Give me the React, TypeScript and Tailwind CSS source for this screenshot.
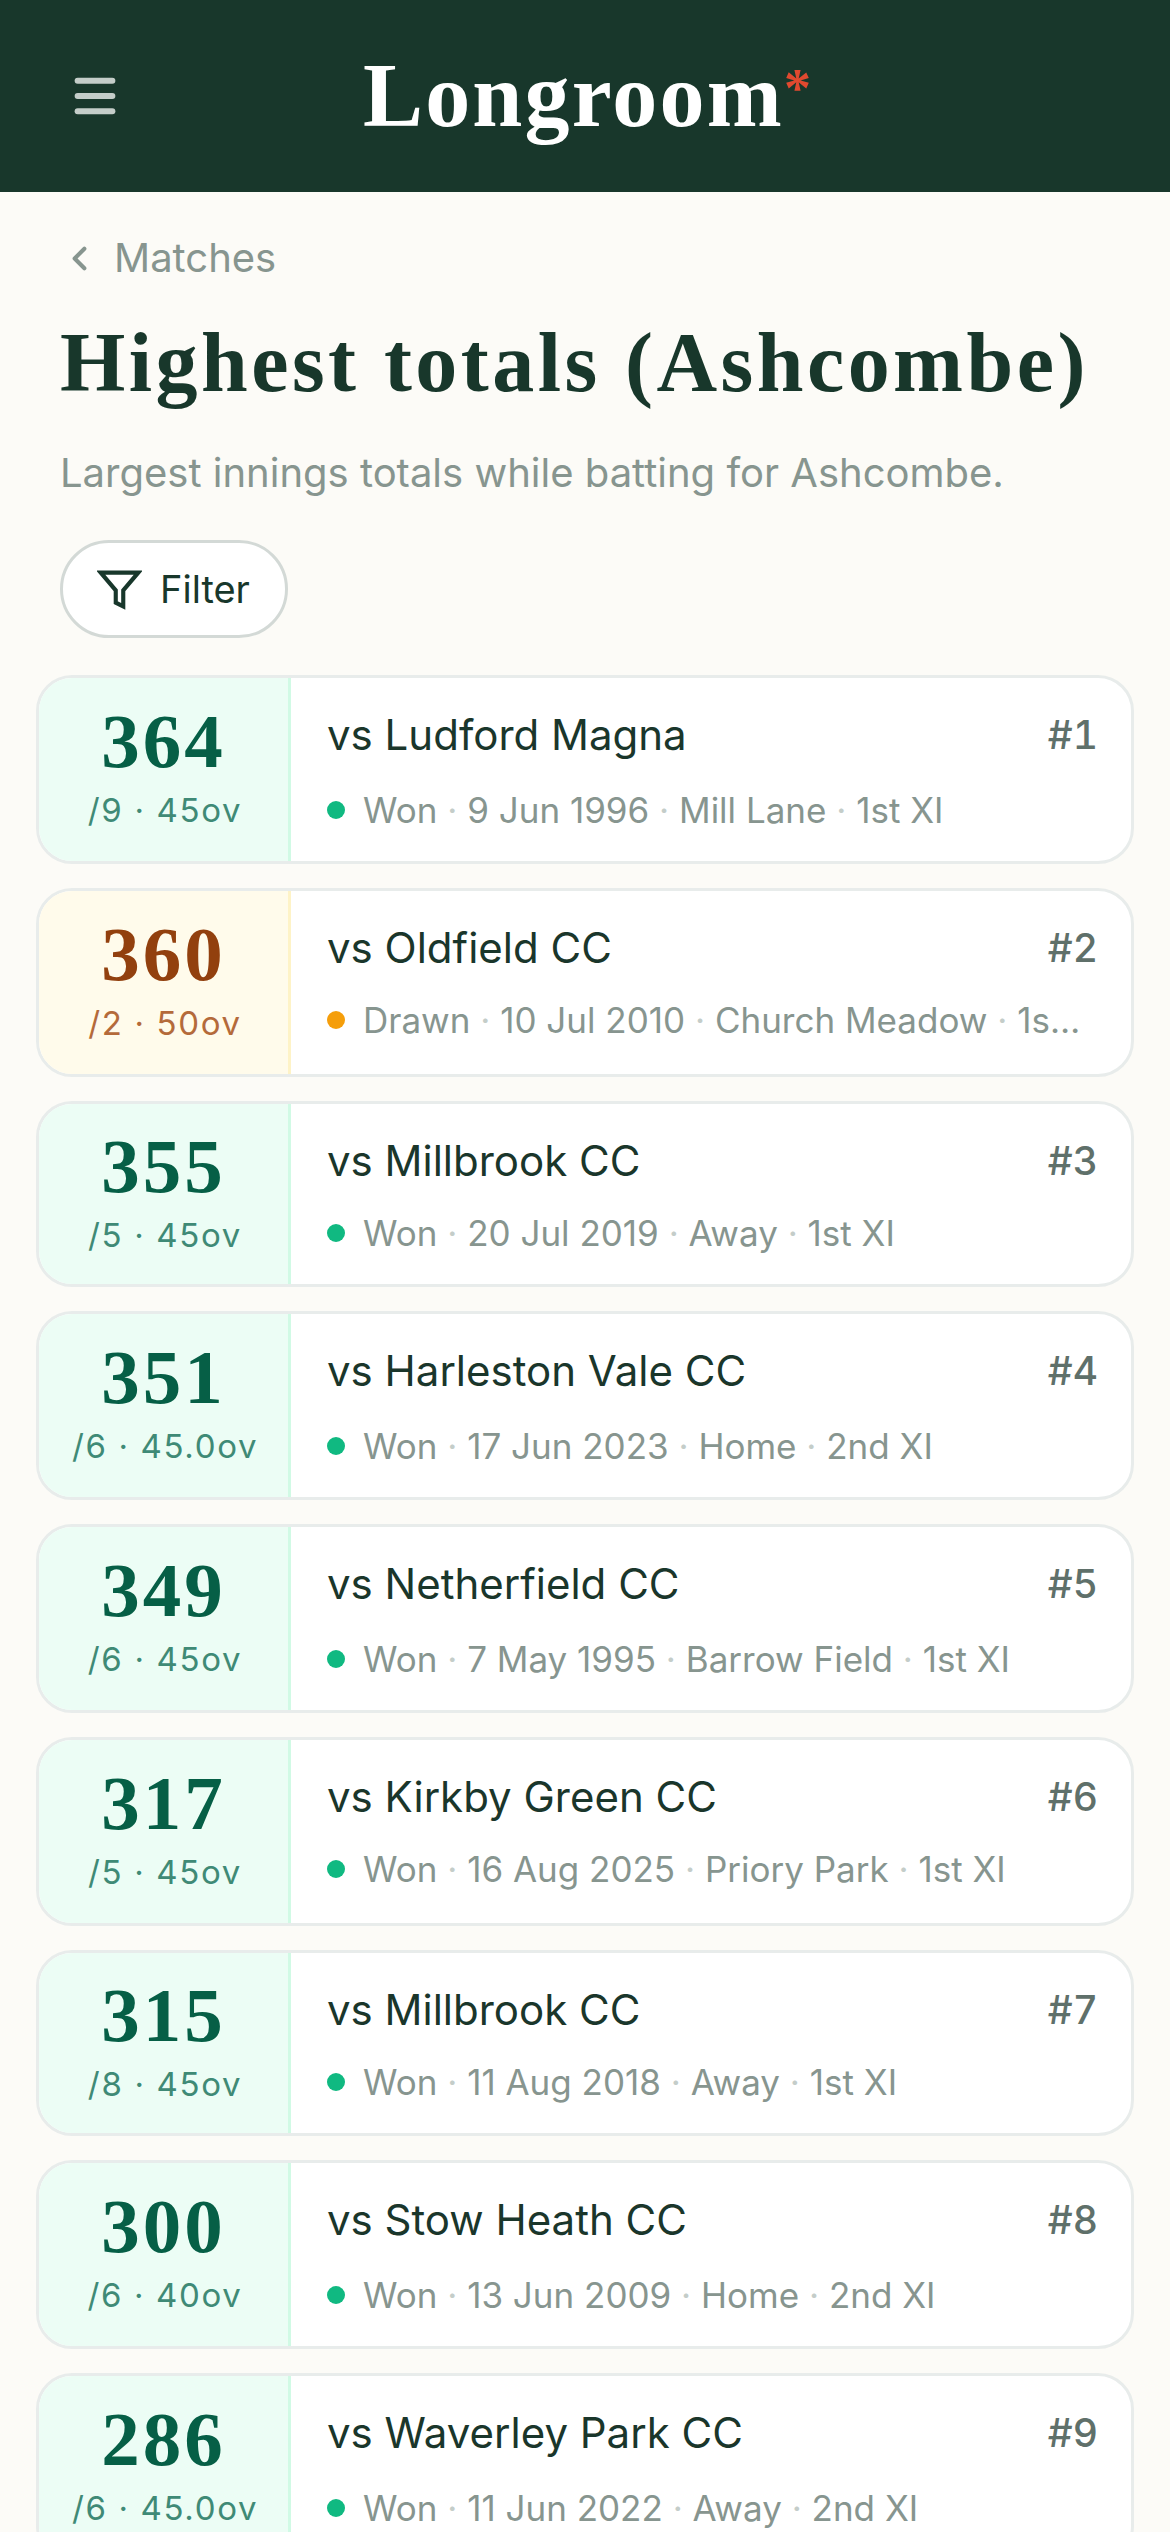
import { ChevronLeft, Menu } from 'lucide-react';

interface Innings {
    total: number;
    sub: string;
    team: string;
    meta: string[];
    drawn?: boolean;
    // the reference has these rows a touch tighter
    tightMeta?: boolean;
    short?: boolean;
}

const innings: Innings[] = [
    { total: 364, sub: '/9 · 45ov', team: 'vs Ludford Magna', meta: ['Won', '9 Jun 1996', 'Mill Lane', '1st XI'] },
    { total: 360, sub: '/2 · 50ov', team: 'vs Oldfield CC', meta: ['Drawn', '10 Jul 2010', 'Church Meadow', '1st XI'], drawn: true, tightMeta: true },
    { total: 355, sub: '/5 · 45ov', team: 'vs Millbrook CC', meta: ['Won', '20 Jul 2019', 'Away', '1st XI'], tightMeta: true, short: true },
    { total: 351, sub: '/6 · 45.0ov', team: 'vs Harleston Vale CC', meta: ['Won', '17 Jun 2023', 'Home', '2nd XI'] },
    { total: 349, sub: '/6 · 45ov', team: 'vs Netherfield CC', meta: ['Won', '7 May 1995', 'Barrow Field', '1st XI'] },
    { total: 317, sub: '/5 · 45ov', team: 'vs Kirkby Green CC', meta: ['Won', '16 Aug 2025', 'Priory Park', '1st XI'], tightMeta: true },
    { total: 315, sub: '/8 · 45ov', team: 'vs Millbrook CC', meta: ['Won', '11 Aug 2018', 'Away', '1st XI'], tightMeta: true, short: true },
    { total: 300, sub: '/6 · 40ov', team: 'vs Stow Heath CC', meta: ['Won', '13 Jun 2009', 'Home', '2nd XI'] },
    { total: 286, sub: '/6 · 45.0ov', team: 'vs Waverley Park CC', meta: ['Won', '11 Jun 2022', 'Away', '2nd XI'] },
];

const InningsCard = ({ item, rank }: { item: Innings; rank: number }) => (
    <div
        className={`flex shrink-0 overflow-hidden rounded-[36px] border-[3px] border-[#e8eceb] bg-white ${
            item.short ? 'h-[186px]' : 'h-[189px]'
        }`}
    >
        <div
            className={`flex w-[252px] shrink-0 flex-col items-center justify-center border-r-[3px] pb-[3px] ${
                item.drawn ? 'border-[#fef3c7] bg-[#fffbeb]' : 'border-[#d1fae5] bg-[#ecfdf5]'
            }`}
        >
            <div
                className={`font-['Liberation_Serif',serif] text-[77px] leading-[72px] font-bold tracking-[3px] ${
                    item.drawn ? 'text-[#92400e]' : 'text-[#065f46]'
                }`}
            >
                {item.total}
            </div>
            <div
                className={`mt-[12px] pl-[3px] text-[33px] leading-[42px] tracking-[1.65px] ${
                    item.drawn ? 'text-[#b46a3a]' : 'text-[#3f8a76]'
                }`}
            >
                {item.sub}
            </div>
        </div>
        <div className="flex min-w-0 flex-1 flex-col pt-[30px] pr-[33px] pl-[36px]">
            <div className="flex items-center justify-between">
                <span className="text-[42px] leading-[54px] text-[#1a362b]">{item.team}</span>
                <span className="text-[39px] leading-[54px] font-medium text-[#5f706a] tabular-nums">#{rank}</span>
            </div>
            <div className={`flex items-center gap-[18px] pr-[9px] ${item.tightMeta ? 'mt-[21px]' : 'mt-[24px]'}`}>
                <span className={`size-[18px] shrink-0 rounded-full ${item.drawn ? 'bg-[#f59e0b]' : 'bg-[#10b981]'}`} />
                <span className="truncate text-[35px] leading-[48px] text-[#87958f]">
                    {item.meta.map((part, i) => (
                        <span key={part}>
                            {i > 0 && <span className="text-[#c4cdc9]"> · </span>}
                            {part}
                        </span>
                    ))}
                </span>
            </div>
        </div>
    </div>
);

export default function App() {
    return (
        <div className="flex h-[2532px] flex-col overflow-hidden bg-[#fcfbf7] font-['Inter',sans-serif]">
            <header className="grid h-[192px] shrink-0 grid-cols-[1fr_auto_1fr] items-center bg-[#18372b] pr-[63px] pl-[69px]">
                <Menu className="size-[52px] text-[#c4cdc9]" strokeWidth={2.8} />
                <div className="font-['Liberation_Serif',serif] text-[90px] leading-none font-bold tracking-[2.2px] text-white">
                    Longroom<span className="relative top-[-20px] text-[54px] text-[#e0492f]">*</span>
                </div>
            </header>
            <main className="flex flex-1 flex-col px-[36px]">
                <div className="mt-[39px] flex items-center gap-[15px] pl-[24px] text-[40px] leading-[54px] text-[#87958f]">
                    <ChevronLeft className="size-[39px]" strokeWidth={2.5} />
                    Matches
                </div>
                <h1 className="mt-[30px] pl-[24px] font-['Liberation_Serif',serif] text-[84px] leading-[96px] font-bold tracking-[3.45px] text-[#18372b]">
                    Highest totals (Ashcombe)
                </h1>
                <p className="mt-[35px] pl-[24px] text-[40px] leading-[54px] text-[#87958f]">
                    Largest innings totals while batting for Ashcombe.
                </p>
                <button className="mt-[40px] ml-[24px] flex h-[98px] w-[228px] items-center gap-[18px] rounded-full border-[3px] border-[#d3d9d6] bg-white pl-[34px] text-[38px] text-[#18372b]">
                    <svg viewBox="0 0 24 24" className="size-[45px]" fill="none" stroke="currentColor" strokeWidth={2.2} strokeLinejoin="miter">
                        <polygon points="22 3 2 3 10 12.46 10 19 14 21 14 12.46 22 3" />
                    </svg>
                    Filter
                </button>
                <div className="mt-[37px] flex flex-col gap-[24px]">
                    {innings.map((item, i) => (
                        <InningsCard key={item.team + item.total} item={item} rank={i + 1} />
                    ))}
                </div>
            </main>
        </div>
    );
}
